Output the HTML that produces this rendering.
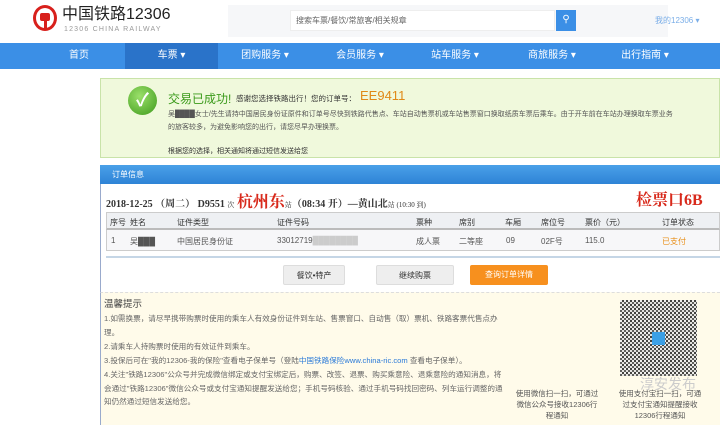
<!DOCTYPE html>
<html><head><meta charset="utf-8"><style>
*{margin:0;padding:0;box-sizing:border-box}
body{width:720px;height:425px;overflow:hidden;background:#fff;font-family:"Liberation Sans","Noto Sans CJK SC",sans-serif;position:relative;color:#333}
.a{position:absolute;white-space:nowrap}
.nav{position:absolute;left:0;top:43px;width:720px;height:26px;background:#3b8fe6}
.nav span{position:absolute;top:0;height:26px;line-height:26px;color:#fff;font-size:10px;text-align:center}
.th span,.td span{position:absolute;font-size:8px}
.btn{position:absolute;top:265px;height:20px;line-height:20px;text-align:center;font-size:8px;border-radius:2px}
.qr{position:absolute;left:620px;top:300px;width:77px;height:76px;background-color:#fff;
background-image:conic-gradient(#222 25%,#ddd 0 50%,#444 0 75%,#eee 0),conic-gradient(#fff 25%,transparent 0 50%,#000 0 75%,transparent 0);
background-size:4px 4px,7px 5px;opacity:.85}
</style></head><body>
<div class="a" style="left:33px;top:5px;width:24px;height:26px;border:3px solid #d8201c;border-radius:50%"></div>
<div class="a" style="left:40px;top:13px;width:10px;height:8px;background:#d8201c;border-radius:2px"></div>
<div class="a" style="left:44px;top:20px;width:3px;height:10px;background:#d8201c"></div>
<div class="a" style="left:62px;top:5px;font-size:16px;line-height:20px;color:#222">中国铁路12306</div>
<div class="a" style="left:64px;top:26px;font-size:7px;color:#999;letter-spacing:1.2px">12306 CHINA RAILWAY</div>
<div class="a" style="left:228px;top:5px;width:440px;height:32px;background:#f6f7f9"></div>
<div class="a" style="left:290px;top:10px;width:265px;height:21px;background:#fff;border:1px solid #eee"></div>
<div class="a" style="left:296px;top:15px;font-size:8px;color:#666">搜索车票/餐饮/常旅客/相关规章</div>
<div class="a" style="left:556px;top:10px;width:20px;height:21px;background:#3b8fe6;color:#fff;font-size:10px;text-align:center;line-height:20px">⚲</div>
<div class="a" style="left:655px;top:15px;font-size:8px;color:#7aaee8">我的12306 ▾</div>
<div class="nav">
<span style="left:40px;width:78px">首页</span>
<span style="left:125px;width:93px;background:#2a73c9">车票 ▾</span>
<span style="left:225px;width:80px">团购服务 ▾</span>
<span style="left:320px;width:80px">会员服务 ▾</span>
<span style="left:415px;width:80px">站车服务 ▾</span>
<span style="left:512px;width:80px">商旅服务 ▾</span>
<span style="left:605px;width:80px">出行指南 ▾</span>
</div>
<div class="a" style="left:100px;top:78px;width:620px;height:80px;background:#f0f9dc;border:1px solid #c9e3a9"></div>
<div class="a" style="left:128px;top:86px;width:29px;height:29px;border-radius:50%;background:radial-gradient(circle at 40% 35%,#9be06a,#3e9a1c);color:#fff;font-size:18px;text-align:center;line-height:28px;font-weight:bold">✓</div>
<div class="a" style="left:168px;top:90px;font-size:12px;color:#3a9a1a">交易已成功!</div>
<div class="a" style="left:236px;top:93px;font-size:7.5px;color:#333">感谢您选择铁路出行！您的订单号：</div>
<div class="a" style="left:360px;top:88px;font-size:13px;color:#e08a18">EE9411</div>
<div class="a" style="left:168px;top:109px;font-size:7px;color:#555">吴████女士/先生请持中国居民身份证原件和订单号尽快到铁路代售点、车站自动售票机或车站售票窗口换取纸质车票后乘车。由于开车前在车站办理换取车票业务</div>
<div class="a" style="left:168px;top:122px;font-size:7px;color:#555">的旅客较多，为避免影响您的出行，请您尽早办理换票。</div>
<div class="a" style="left:168px;top:146px;font-size:7px;color:#333">根据您的选择，相关通知将通过短信发送给您</div>
<div class="a" style="left:100px;top:165px;width:620px;height:19px;background:linear-gradient(#4aa0e8,#2e83d6)"></div>
<div class="a" style="left:112px;top:169px;font-size:8px;color:#fff">订单信息</div>
<div class="a" style="left:100px;top:184px;width:1px;height:241px;background:#9ac"></div>
<div class="a" style="left:106px;top:193px;height:20px;line-height:20px;font-size:10px;font-weight:bold;color:#333;font-family:'Liberation Serif','Noto Serif CJK SC',serif">2018-12-25 （周二） D9551 <span style="font-size:7px;font-weight:normal">次</span> <span style="color:#d82a1c;font-size:16px">杭州东</span><span style="font-size:7px;font-weight:normal">站</span>（08:34 开）—黄山北<span style="font-size:7px;font-weight:normal">站 (10:30 到)</span></div>
<div class="a" style="left:636px;top:191px;line-height:20px;font-size:16px;font-weight:bold;color:#d82a1c;font-family:'Liberation Serif','Noto Serif CJK SC',serif">检票口6B</div>
<div class="a th" style="left:106px;top:212px;width:614px;height:18px;background:#eef0f3;border:1px solid #ccc;border-bottom:2px solid #bbb">
<span style="left:3px;top:4px">序号</span><span style="left:23px;top:4px">姓名</span><span style="left:70px;top:4px">证件类型</span><span style="left:170px;top:4px">证件号码</span><span style="left:309px;top:4px">票种</span><span style="left:352px;top:4px">席别</span><span style="left:398px;top:4px">车厢</span><span style="left:434px;top:4px">席位号</span><span style="left:478px;top:4px">票价（元）</span><span style="left:555px;top:4px">订单状态</span></div>
<div class="a td" style="left:106px;top:230px;width:614px;height:21px;background:#f7f7f9;border:1px solid #ccc;border-top:none;color:#555">
<span style="left:4px;top:6px">1</span><span style="left:23px;top:6px">吴███</span><span style="left:70px;top:6px">中国居民身份证</span><span style="left:170px;top:6px">33012719<span style="color:#ccc">████████</span></span><span style="left:309px;top:6px">成人票</span><span style="left:352px;top:6px">二等座</span><span style="left:399px;top:6px">09</span><span style="left:434px;top:6px">02F号</span><span style="left:478px;top:6px">115.0</span><span style="left:555px;top:6px;color:#e8901c">已支付</span></div>
<div class="a" style="left:106px;top:256px;width:614px;height:2px;background:#c5d6e6"></div>
<div class="btn" style="left:283px;width:62px;background:#eee;border:1px solid #ddd">餐饮•特产</div>
<div class="btn" style="left:376px;width:78px;background:#eee;border:1px solid #ddd">继续购票</div>
<div class="btn" style="left:470px;width:78px;background:#f7901e;color:#fff">查询订单详情</div>
<div class="a" style="left:100px;top:292px;width:620px;height:133px;background:#fffbea;border-top:1px dashed #ddd;border-left:1px solid #9ac"></div>
<div class="a" style="left:104px;top:296px;font-size:9.5px;color:#444">温馨提示</div>
<div class="a" style="left:104px;top:312px;font-size:7.6px;color:#666;line-height:13.9px">1.如需换票，请尽早携带购票时使用的乘车人有效身份证件到车站、售票窗口、自动售（取）票机、铁路客票代售点办<br>理。<br>2.请乘车人持购票时使用的有效证件到乘车。<br>3.投保后可在"我的12306-我的保险"查看电子保单号（登陆<span style="color:#2a7ad8">中国铁路保险www.china-ric.com</span> 查看电子保单）。<br>4.关注"铁路12306"公众号并完成微信绑定或支付宝绑定后，购票、改签、退票、购买乘意险、退乘意险的通知消息，将<br>会通过"铁路12306"微信公众号或支付宝通知提醒发送给您；手机号码核验、通过手机号码找回密码、列车运行调整的通<br>知仍然通过短信发送给您。</div>
<div class="qr"></div>
<div class="a" style="left:652px;top:332px;width:13px;height:13px;background:#3ba0e6"></div>
<div class="a" style="left:513px;top:388px;width:88px;font-size:7.5px;color:#555;text-align:center;white-space:normal;line-height:11px">使用微信扫一扫，可通过微信公众号接收12306行程通知</div>
<div class="a" style="left:616px;top:388px;width:88px;font-size:7.5px;color:#555;text-align:center;white-space:normal;line-height:11px">使用支付宝扫一扫，可通过支付宝通知提醒接收12306行程通知</div>
<div class="a" style="left:640px;top:374px;font-size:14px;color:#ccc">淳安发布</div>
</body></html>
